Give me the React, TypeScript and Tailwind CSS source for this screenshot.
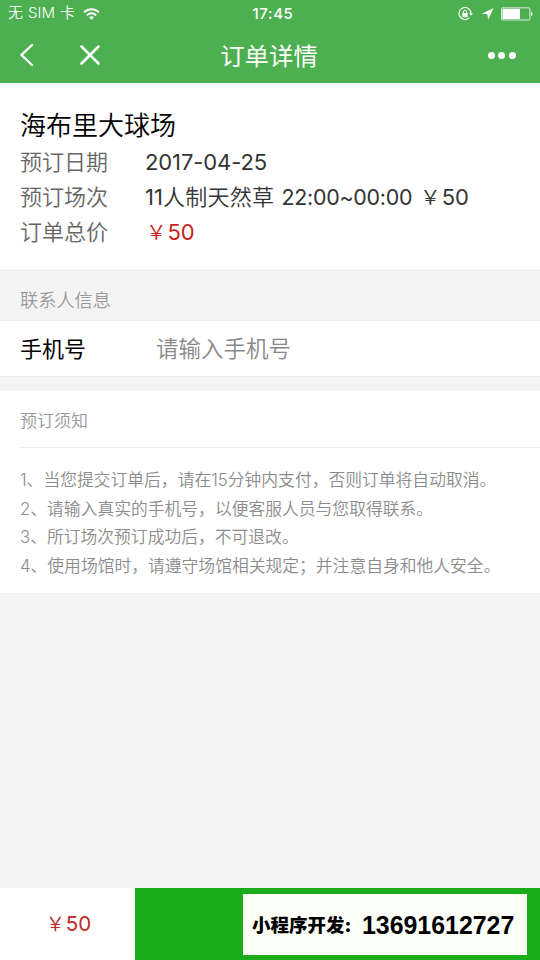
const orderRows = [
  { label: "预订日期", value: "2017-04-25" },
  { label: "预订场次", people: "11", value: "人制天然草", time: "22:00~00:00", price: "50" },
];

const notices = [
  "1、当您提交订单后，请在15分钟内支付，否则订单将自动取消。",
  "2、请输入真实的手机号，以便客服人员与您取得联系。",
  "3、所订场次预订成功后，不可退改。",
  "4、使用场馆时，请遵守场馆相关规定；并注意自身和他人安全。",
];

const Price = ({ amount }: { amount: string }) => (
  <span className="inline-flex items-baseline">
    <span className="w-[1.02em] text-center">
      <span className="text-[0.94em]">￥</span>
    </span>
    <span className="font-normal">{amount}</span>
  </span>
);

const StatusBar = () => (
  <div className="grid h-[27px] grid-cols-3 items-center pl-2 pr-[7px] text-[15px]">
    <div className="flex items-center gap-[8px]">
      <span className="flex gap-[5px] font-[350]">
        <span>无</span>
        <span>SIM</span>
        <span>卡</span>
      </span>
      <svg width="17" height="12" viewBox="0 0 17 12" fill="none" stroke="currentColor" strokeWidth="1.9">
        <path d="M1 4.3C5.2.2 11.8.2 16 4.3" />
        <path d="M3.8 7.2c2.7-2.6 6.7-2.6 9.4 0" />
        <path d="M8.5 11.7 6 9.1c1.4-1.3 3.6-1.3 5 0z" fill="currentColor" stroke="none" />
      </svg>
    </div>
    <div className="pl-[5px] pt-px text-center font-medium tracking-[0.6px]">17:45</div>
    <div className="flex items-center justify-end">
      <svg className="mr-[8px]" width="15" height="14" viewBox="0 0 15 14" fill="none" stroke="currentColor">
        <path d="M11.4 10.6A6 6 0 1 1 13 6.4" strokeWidth="1.2" />
        <path d="M11 6.2h4l-2 2.6z" fill="currentColor" stroke="none" />
        <rect x="4.3" y="6" width="5.4" height="4.2" fill="currentColor" stroke="none" />
        <path d="M5.4 6.2V4.9a1.6 1.6 0 0 1 3.2 0v1.3" strokeWidth="1" />
      </svg>
      <svg className="mr-[7px]" width="13" height="12" viewBox="0 0 13 12" fill="currentColor">
        <path d="M12.5.3 7.2 11.8 6.4 6.3.6 5.8z" />
      </svg>
      <svg width="32" height="14" viewBox="0 0 32 14">
        <rect x=".5" y=".8" width="28.4" height="12.2" rx="1.3" fill="none" stroke="currentColor" strokeOpacity=".8" />
        <rect x="1.5" y="1.8" width="17.5" height="10.2" fill="currentColor" />
        <path d="M30 4.8c1.9.5 1.9 3.9 0 4.4z" fill="currentColor" />
      </svg>
    </div>
  </div>
);

const NavBar = () => (
  <div className="grid h-14 grid-cols-3 items-center pl-5 pr-6">
    <div className="flex items-center gap-[46px]">
      <svg width="14" height="24" viewBox="0 0 14 24" fill="none" stroke="currentColor" strokeWidth="2.4" strokeLinecap="round">
        <path d="M12 2 1.5 12 12 22" />
      </svg>
      <svg width="20" height="20" viewBox="0 0 20 20" fill="none" stroke="currentColor" strokeWidth="2.5" strokeLinecap="round">
        <path d="m1.5 1.5 17 17m0-17-17 17" />
      </svg>
    </div>
    <div className="whitespace-nowrap pl-[2px] pt-[2px] text-center text-[24.4px]">订单详情</div>
    <div className="flex justify-end gap-[3.5px]">
      <span className="size-[7px] rounded-full bg-white" />
      <span className="size-[7px] rounded-full bg-white" />
      <span className="size-[7px] rounded-full bg-white" />
    </div>
  </div>
);

const App = () => {
  return (
    <div className="flex h-[960px] w-[540px] flex-col overflow-hidden bg-[#f4f4f4] font-['Inter','Noto_Sans_CJK_SC',sans-serif]">
      <header className="h-[83px] shrink-0 bg-[#4caf50] text-white">
        <StatusBar />
        <NavBar />
      </header>

      <section className="h-[188px] border-b border-[#ececec] bg-white px-5 pt-[25px]">
        <h1 className="h-[37px] text-[26px] leading-[36px] font-[350] text-black">海布里大球场</h1>
        {orderRows.map((row) => (
          <div key={row.label} className="flex h-[35px] items-center whitespace-nowrap text-[22px] font-[350] text-[#333333]">
            <span className="w-[125px] text-[#666666]">{row.label}</span>
            {row.people && <span className="font-normal">{row.people}</span>}
            {row.people ? (
              <span className="tracking-[0.3px]">{row.value}</span>
            ) : (
              <span className="font-normal tracking-[-0.1px]">{row.value}</span>
            )}
            {row.time && <span className="mr-[7px] ml-[7px] text-[21.4px] font-normal tracking-[-0.25px]">{row.time}</span>}
            {row.price && <Price amount={row.price} />}
          </div>
        ))}
        <div className="flex h-[35px] items-center text-[22px] font-[350]">
          <span className="w-[125px] text-[#666666]">订单总价</span>
          <span className="text-[#cb1f22]">
            <Price amount="50" />
          </span>
        </div>
      </section>

      <div className="flex h-[50px] items-center border-b border-[#ececec] px-5 pt-[11px] text-[18.2px] font-[350] text-[#999999]">
        联系人信息
      </div>
      <section className="flex h-[56px] items-center border-b border-[#ececec] bg-white px-5 pt-px">
        <label htmlFor="phone" className="w-[136px] text-[22px] text-black">手机号</label>
        <input
          id="phone"
          type="tel"
          placeholder="请输入手机号"
          className="w-72 text-[22.5px] font-[350] outline-none placeholder:text-[#888888]"
        />
      </section>

      <section className="mt-[14px] h-[203px] border-b border-[#ececec] bg-white pl-5">
        <div className="flex h-[57px] items-center border-b border-[#eeeeee] pt-[5px] text-[17px] font-[350] text-[#999999]">
          预订须知
        </div>
        <ol className="pt-[18px]">
          {notices.map((notice) => (
            <li key={notice} className="h-[28.6px] whitespace-nowrap text-[16.8px] leading-[28.6px] font-[350] text-[#8c8c8c]">
              {notice}
            </li>
          ))}
        </ol>
      </section>

      <footer className="mt-auto flex h-[72px] bg-white">
        <div className="flex w-[135px] items-center justify-center pl-px text-[20.5px] font-[350] text-[#bd2926]">
          <Price amount="50" />
        </div>
        <div className="flex flex-1 items-start justify-end bg-[#1aad19] pt-[6px] pr-[13px]">
          <div className="flex h-[61px] w-[284px] items-center bg-[#fcfff8] pt-[2px] pl-[9px] whitespace-nowrap text-black">
            <span className="w-[110px] text-[18.5px] font-black">小程序开发:</span>
            <span className="font-['Liberation_Sans'] text-[24.9px] font-bold">13691612727</span>
          </div>
        </div>
      </footer>
    </div>
  );
};

export default App;
